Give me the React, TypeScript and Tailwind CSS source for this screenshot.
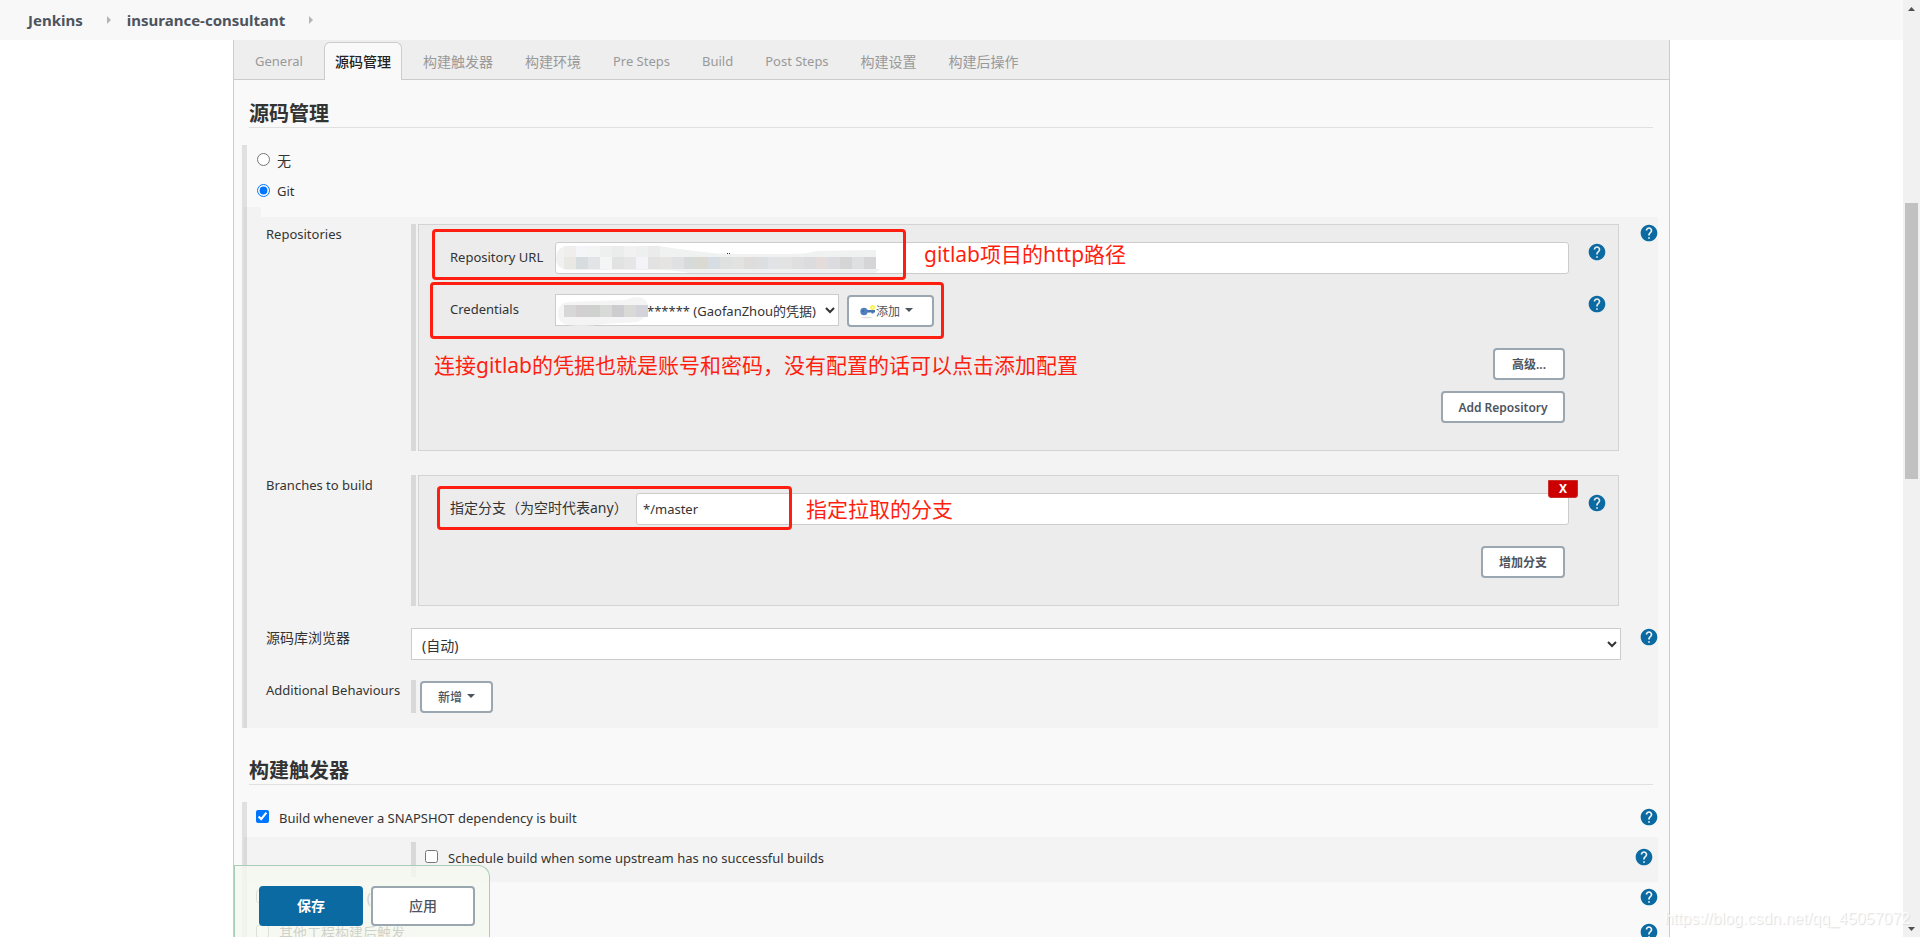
import type { ReactNode } from "react";
import { MdHelp } from "react-icons/md";

const tabs = [
  { label: "General", size: "text-[13px]" },
  { label: "源码管理", size: "text-sm", active: true },
  { label: "构建触发器", size: "text-sm" },
  { label: "构建环境", size: "text-sm" },
  { label: "Pre Steps", size: "text-[13px]" },
  { label: "Build", size: "text-[13px]" },
  { label: "Post Steps", size: "text-[13px]" },
  { label: "构建设置", size: "text-sm" },
  { label: "构建后操作", size: "text-sm" },
];

const urlTop = ["#f0eeec", "#f4f5f8", "#f3f4f4", "#eef0f0", "#ebedec", "#f1f1f1", "#eeefef", "#ebebeb"];

const urlBottom = [
  "#e9e8e3", "#d7dcde", "#e3e4e6", "#f4f6f6", "#e2e2e2", "#e6e6e6", "#f4f4f8", "#e2e2e2", "#e6e4e2",
  "#dfe1e3", "#d6dad8", "#dad9d2", "#d8dde3", "#dfe0e0", "#e2e2e1", "#dedddb", "#dcdee0", "#e1e3e6",
  "#e3e3e3", "#dfdfe0", "#dcdcde", "#e3dcda", "#dcdce0", "#d5d5d5", "#dedfe1", "#d5d5d7",
];

const userTiles = ["#d8d7d8", "#d2cfd1", "#cfd1ce", "#d8dad8", "#cdcdcf", "#d9dad7", "#d3d4da"];

function Help() {
  return (
    <a href="#help" aria-label="Help" className="block size-5 shrink-0">
      <MdHelp size={20} color="#0b6aa2" />
    </a>
  );
}

function Caret() {
  return (
    <svg width="8" height="4" viewBox="0 0 8 4" className="mb-1 ml-[5px]">
      <path d="M0 0h8L4 4z" fill="#4d545d" />
    </svg>
  );
}

function KeyIcon() {
  return (
    <svg width="16" height="16" viewBox="0 0 16 16">
      <ellipse cx="7" cy="13.500" rx="6" ry="0.800" fill="#dedede" />
      <circle cx="12.500" cy="3.500" r="1.700" fill="#fdfbc0" stroke="#fbf03c" strokeWidth="1.500" />
      <path d="M6 6h9v2.500h-1.500v1h-2v-1H6z" fill="#4673ad" />
      <circle cx="4" cy="7.500" r="3.700" fill="#4f80bd" />
      <circle cx="3" cy="7" r="0.800" fill="#2f5a94" />
    </svg>
  );
}

function Crumb() {
  return (
    <svg width="4" height="8" viewBox="0 0 4 8" className="mr-4 ml-6">
      <path d="M0 0l4 4-4 4z" fill="#b5b5b5" />
    </svg>
  );
}

function Button({ className, children }: { className: string; children: ReactNode }) {
  return (
    <button
      type="button"
      className={`flex h-8 items-center justify-center rounded border-2 border-[#9aa6b0] bg-white pt-[2px] text-xs text-[#4d545d] ${className}`}
    >
      {children}
    </button>
  );
}

function Title({ className, children }: { className: string; children: ReactNode }) {
  return (
    <h2 className={`mr-4 ml-[15px] border-b border-[#e0e0e0] text-xl leading-[26px] font-bold ${className}`}>
      {children}
    </h2>
  );
}

function Frame({ children }: { children: ReactNode }) {
  return (
    <div className="mr-[2px] border-l-[5px] border-[#d9d9d9] pl-[2px]">
      <div className="relative border border-[#d3d3d3] bg-[#ececec] pt-[17px] pb-[27px]">{children}</div>
    </div>
  );
}

function Setting({
  label,
  htmlFor,
  className,
  help = true,
  children,
}: {
  label: string;
  htmlFor?: string;
  className: string;
  help?: boolean;
  children: ReactNode;
}) {
  return (
    <div className={`flex items-start ${className}`}>
      <label htmlFor={htmlFor} className="w-[145px] shrink-0 leading-5">
        {label}
      </label>
      <div className="min-w-0 flex-1">{children}</div>
      <div className="-mt-px -mr-px flex w-[38px] shrink-0 justify-end">{help && <Help />}</div>
    </div>
  );
}

function Check({
  id,
  label,
  checked = false,
  className = "",
}: {
  id: string;
  label: string;
  checked?: boolean;
  className?: string;
}) {
  return (
    <div className={`flex h-[35px] items-start pl-[9px] ${className}`}>
      <input id={id} type="checkbox" defaultChecked={checked} className="mt-2 size-[13px] shrink-0" />
      <label htmlFor={id} className="mt-[6px] ml-[10px] flex-1 leading-5">
        {label}
      </label>
      <div className="mt-[5px] -mr-px">
        <Help />
      </div>
    </div>
  );
}

export default function App() {
  return (
    <div className="flex h-screen overflow-hidden bg-white font-['Noto_Sans','Noto_Sans_CJK_SC',sans-serif] text-[13px] text-[#333]">
      <div className="flex min-w-0 flex-1 flex-col">
        {/* Breadcrumbs */}
        <nav className="flex h-10 shrink-0 items-center bg-[#f8f8f8] pl-7 text-[15px] font-bold text-[#4d545d]">
          <a href="#jenkins">Jenkins</a>
          <Crumb />
          <a href="#job">insurance-consultant</a>
          <Crumb />
        </nav>

        <main className="relative mx-[233px] min-h-0 flex-1 overflow-hidden border-x border-[#ccc] bg-[#f9f9f9]">
          {/* Tabs */}
          <div className="flex h-10 border-b border-[#ccc] bg-[#eee] pt-[2px] pl-[5px]">
            {tabs.map((tab) => (
              <button
                key={tab.label}
                type="button"
                className={`mx-[5px] -mb-px flex items-center rounded-t-md border border-b-0 px-[10px] ${tab.size} ${
                  tab.active ? "border-[#ccc] bg-[#f9f9f9] font-medium text-[#222]" : "border-transparent text-[#999]"
                }`}
              >
                {tab.label}
              </button>
            ))}
          </div>

          {/* Source code management */}
          <Title className="pt-[21px]">源码管理</Title>
          <section className="mt-[17px] mr-[11px] ml-2 border-l-[5px] border-[#e0e0e0]">
            <div className="flex h-[31px] items-center pl-[10px]">
              <input id="scm-none" type="radio" name="scm" className="mb-[2px] size-[13px]" />
              <label htmlFor="scm-none" className="ml-[7px] text-sm">
                无
              </label>
            </div>
            <div className="flex h-[31px] items-center pl-[10px]">
              <input id="scm-git" type="radio" name="scm" defaultChecked className="mb-[2px] size-[13px]" />
              <label htmlFor="scm-git" className="ml-[7px]">
                Git
              </label>
            </div>
            <div className="-ml-[3px] h-[10px] w-[17px] border-l-[3px] border-[#d9d9d9] bg-[#f3f3f3]" />
            <div className="-ml-[3px] border-l-[3px] border-[#d9d9d9] bg-[#f3f3f3] pt-[7px] pb-[15px] pl-[19px]">
              <Setting label="Repositories" className="mb-6">
                <Frame>
                  <div className="flex items-start pr-[11px] pl-[31px]">
                    <label htmlFor="url" className="mt-[5px] w-[105px] shrink-0 leading-5">
                      Repository URL
                    </label>
                    <div className="relative mr-[18px] flex-1">
                      <input id="url" type="text" className="block h-8 w-full rounded-[3px] border border-[#ccc] bg-white px-[6px]" />
                      <svg width="332" height="32" viewBox="0 0 332 32" className="absolute top-0 left-0">
                        <path
                          d="M13 4H104C125 7 150 11 172 12H235Q252 12 262 9L321 8V27L325 27L320 31H135Q120 28 100 28H13Q1 27 1 16T13 4Z"
                          fill="#f0f1f1"
                        />
                        {urlTop.map((fill, i) => (
                          <rect key={i} x={9 + i * 12} y="4" width="12" height="11" fill={fill} />
                        ))}
                        {urlBottom.map((fill, i) => (
                          <rect key={i} x={9 + i * 12} y="15" width="12" height="12" fill={fill} />
                        ))}
                        <path d="M172 11h1v1h-1zM174 11h1v1h-1z" fill="#333" />
                      </svg>
                    </div>
                    <Help />
                  </div>
                  <div className="mt-5 flex items-start pr-[11px] pl-[31px]">
                    <label htmlFor="credentials" className="mt-[5px] w-[105px] shrink-0 leading-5">
                      Credentials
                    </label>
                    <div className="relative">
                      <select id="credentials" className="block h-8 w-[284px] border border-[#ccc] bg-white pt-[2px] pl-[87px]">
                        <option>****** (GaofanZhou的凭据)</option>
                      </select>
                      <svg width="96" height="34" viewBox="0 0 96 34" className="absolute top-0 left-0">
                        <path
                          d="M14 8L70 6Q76 3 83 3Q93 4 93 14T82 28L50 30Q30 33 12 31Q2 28 3 18T14 8Z"
                          fill="#f4f4f4"
                        />
                        {userTiles.map((fill, i) => (
                          <rect key={i} x={9 + i * 12} y="11" width="12" height="12" fill={fill} />
                        ))}
                      </svg>
                    </div>
                    <Button className="mt-px ml-2 w-[87px] pr-2">
                      <KeyIcon />
                      添加
                      <Caret />
                    </Button>
                    <div className="ml-auto">
                      <Help />
                    </div>
                  </div>
                  <div className="mt-[21px] flex flex-col items-end gap-[11px] pr-[53px]">
                    <Button className="w-[72px] font-semibold">高级...</Button>
                    <Button className="w-[124px] font-semibold">Add Repository</Button>
                  </div>

                  {/* Markup over the form */}
                  <div className="pointer-events-none absolute top-1 left-[13px] h-[51px] w-[474px] rounded border-3 border-[#ff1f10]" />
                  <div className="pointer-events-none absolute top-[57px] left-[11px] h-[57px] w-[514px] rounded border-3 border-[#ff1f10]" />
                  <p className="absolute top-[15px] left-[505px] text-[21px] leading-7 text-[#ff1f10]">gitlab项目的http路径</p>
                  <p className="absolute top-[126px] left-[15px] text-[21px] leading-7 text-[#ff1f10]">
                    连接gitlab的凭据也就是账号和密码，没有配置的话可以点击添加配置
                  </p>
                </Frame>
              </Setting>

              <Setting label="Branches to build" className="mb-[22px]" help={false}>
                <Frame>
                  <div className="flex items-start pr-[11px] pl-[31px]">
                    <label htmlFor="branch" className="mt-[5px] w-[186px] shrink-0 text-sm leading-5">
                      指定分支（为空时代表any）
                    </label>
                    <input
                      id="branch"
                      type="text"
                      defaultValue="*/master"
                      className="mr-[18px] h-8 min-w-0 flex-1 rounded-[3px] border border-[#ccc] bg-white px-[6px]"
                    />
                    <Help />
                  </div>
                  <div className="mt-[21px] flex justify-end pr-[53px]">
                    <Button className="w-[84px] font-semibold">增加分支</Button>
                  </div>
                  <button
                    type="button"
                    className="absolute top-1 right-10 flex h-[18px] w-[30px] items-center justify-center rounded-b-[3px] border border-[#c9302c] bg-[#c00] text-xs font-bold text-white"
                  >
                    X
                  </button>
                  <div className="pointer-events-none absolute top-[10px] left-[18px] h-11 w-[355px] rounded border-3 border-[#ff1f10]" />
                  <p className="absolute top-[19px] left-[387px] text-[21px] leading-7 text-[#ff1f10]">指定拉取的分支</p>
                </Frame>
              </Setting>

              <Setting label="源码库浏览器" htmlFor="browser" className="mb-5 text-sm">
                <select id="browser" className="block h-8 w-full border border-[#ccc] bg-white pt-[2px] pl-[6px] text-sm">
                  <option>(自动)</option>
                </select>
              </Setting>

              <Setting label="Additional Behaviours" className="" help={false}>
                <div className="border-l-[5px] border-[#d9d9d9] pt-px pl-1">
                  <Button className="w-[73px] font-medium">
                    新增
                    <Caret />
                  </Button>
                </div>
              </Setting>
            </div>
          </section>

          {/* Build triggers */}
          <Title className="pt-[30px]">构建触发器</Title>
          <section className="mt-[17px] mr-[11px] ml-2 border-l-[5px] border-[#e0e0e0]">
            <Check id="snapshot" label="Build whenever a SNAPSHOT dependency is built" checked />
            <div className="-ml-[3px] border-l-[3px] border-[#d9d9d9] bg-[#f3f3f3] py-[5px] pr-[5px] pl-[164px]">
              <Check
                id="schedule"
                label="Schedule build when some upstream has no successful builds"
                className="border-l-[5px] border-[#d9d9d9]"
              />
            </div>
            <Check id="remote" label="触发远程构建 (例如,使用脚本)" className="text-sm" />
            <Check id="upstream" label="其他工程构建后触发" className="text-sm" />
          </section>

          {/* Sticky actions */}
          <div className="absolute bottom-0 left-0 flex h-[72px] w-64 gap-2 rounded-tr-xl border border-b-0 border-[#a9cdb8] bg-[#f5f9ef]/80 pt-5 pl-6">
            <button type="submit" className="h-10 w-[104px] rounded bg-[#0b6aa2] text-sm font-bold text-white">
              保存
            </button>
            <button
              type="button"
              className="h-10 w-[104px] rounded border-2 border-[#9aa6b0] bg-white text-sm font-medium text-[#4d545d]"
            >
              应用
            </button>
          </div>
        </main>
      </div>

      {/* Page scrollbar */}
      <aside className="flex w-[17px] shrink-0 flex-col items-center bg-[#f1f1f1]">
        <svg width="17" height="17" viewBox="0 0 17 17">
          <path d="M5 11l3.500-4 3.500 4z" fill="#505050" />
        </svg>
        <div className="mt-[186px] h-[276px] w-[13px] bg-[#c1c1c1]" />
        <svg width="17" height="17" viewBox="0 0 17 17" className="mt-auto">
          <path d="M5 7l3.500 4 3.500-4z" fill="#505050" />
        </svg>
      </aside>

      <p className="absolute right-[10px] bottom-[6px] font-['Liberation_Sans',sans-serif] text-base text-white/80 [text-shadow:1px_1px_1px_#ddd]">
        https://blog.csdn.net/qq_45057072
      </p>
    </div>
  );
}
